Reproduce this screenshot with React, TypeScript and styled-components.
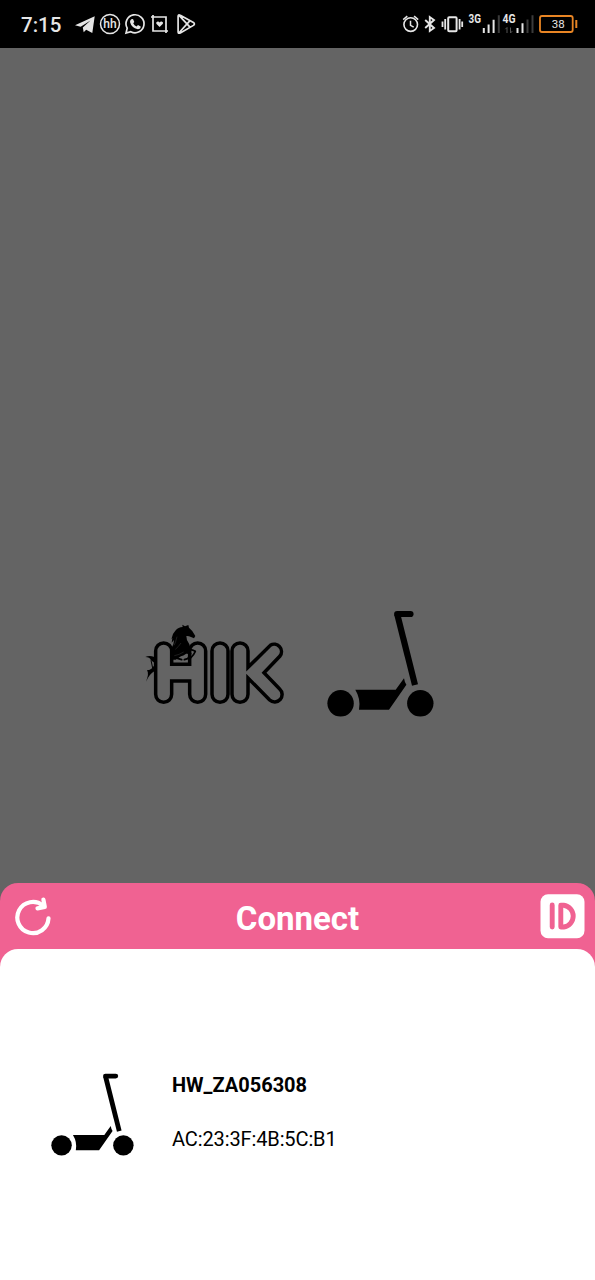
import React from 'react';
import styled, { createGlobalStyle } from 'styled-components';

const GlobalStyle = createGlobalStyle`
  * { box-sizing: border-box; }
  body { margin: 0; background: #646464; font-family: Roboto, sans-serif; }
  svg { display: block; flex: none; }
`;

const Screen = styled.div`
  display: flex;
  flex-direction: column;
  width: 595px;
  height: 1280px;
  overflow: hidden;
  background: #646464;
`;

const StatusBar = styled.header`
  display: flex;
  align-items: center;
  justify-content: space-between;
  height: 48px;
  flex: none;
  padding: 0 16px 0 21px;
  background: #000;
  color: #e6e6e6;
`;

const StatusGroup = styled.div`
  display: flex;
  align-items: center;
`;

const Clock = styled.span`
  width: 53px;
  font-size: 20.5px;
  font-weight: 500;
  line-height: 24px;
  padding-top: 1px;
`;

const Backdrop = styled.main`
  display: flex;
  align-items: flex-start;
  flex: 1;
  padding: 562px 0 0 145px;
`;

const LogoSlot = styled.div`
  width: 182px;
  padding-top: 14px;
`;

const Sheet = styled.section`
  display: flex;
  flex-direction: column;
  height: 397px;
  flex: none;
  border-radius: 18px 18px 0 0;
  background: #f06292;
`;

const SheetHeader = styled.div`
  display: flex;
  align-items: center;
  justify-content: space-between;
  height: 66px;
  padding: 1px 10px 0 14px;
`;

const Title = styled.h1`
  margin: 0;
  padding: 4px 0 0 3px;
  color: #fff;
  font-size: 33px;
  font-weight: 700;
  line-height: 40px;
`;

const IconButton = styled.button<{ $width: number }>`
  display: flex;
  width: ${(p) => p.$width}px;
  padding: 0;
  border: 0;
  background: none;
`;

const DeviceList = styled.div`
  flex: 1;
  padding: 124px 0 0 51px;
  border-radius: 18px 18px 0 0;
  background: #fff;
`;

const DeviceRow = styled.div`
  display: flex;
  align-items: flex-start;
  gap: 38px;
`;

const DeviceInfo = styled.div`
  display: flex;
  flex-direction: column;
  gap: 30px;
  color: #000;
`;

const DeviceText = styled.span<{ $bold?: boolean }>`
  font-size: 20px;
  font-weight: ${(p) => (p.$bold ? 700 : 400)};
  letter-spacing: ${(p) => (p.$bold ? '0' : '-0.12px')};
  line-height: 24px;
`;

const Scooter = ({ size }: { size: number }) => (
  <svg width={size} height={size} viewBox="0 0 107 107">
    <circle cx="13.6" cy="93.3" r="13.2" />
    <circle cx="93.3" cy="93.3" r="13.2" />
    <path d="M28.3 79.8H68.7L77 68.2Q77.6 72 79.4 74.8L62 99.7H32Q34 89 28.3 79.8Z" />
    <path d="M83.5 4H70.2" stroke="#000" strokeWidth="6.2" strokeLinecap="round" />
    <path d="M70.2 4L88 75" stroke="#000" strokeWidth="6.2" />
  </svg>
);

const HikLogo = () => (
  <svg width="140" height="81" viewBox="30 42 420 243">
    <g fill="none" stroke="#000" strokeWidth="10.5" strokeLinejoin="miter">
      <path d="M62 123A24 24 0 0 1 110 123V163H164V123A24 24 0 0 1 212 123V253A24 24 0 0 1 164 253V213H110V253A24 24 0 0 1 62 253Z" />
      <path d="M231 123A24 24 0 0 1 279 123V253A24 24 0 0 1 231 253Z" />
      <path d="M291 123A24 24 0 0 1 339 123V172L406 106A22 22 0 0 1 435 138L387 188L434 237A22 22 0 0 1 404 270L339 204V253A24 24 0 0 1 291 253Z" />
    </g>
    <path d="M109 88L114 72L121 62Q130 51 143 51L142 44L150 49L160 45L162 53Q174 62 181 78L177 85L168 81Q160 77 154 78Q154 90 161 99Q168 110 161 123Q153 135 138 139L122 149H109V116Q117 104 117 90L110 98L112 84Z" />
    <path d="M155 121Q168 116 181 124Q177 134 167 144M150 127L167 131L158 146L148 149M120 143L140 149" fill="none" stroke="#000" strokeWidth="5" strokeLinejoin="round" strokeLinecap="round" />
    <path d="M126 80Q122 98 117 106M138 99Q129 112 121 118M118 137Q132 135 146 126" fill="none" stroke="#4a4a4a" strokeWidth="1.2" />
    <path d="M58 141Q43 135 31 141Q44 141 48 151L58 158ZM58 168Q46 182 36 181Q43 190 33 215Q45 190 58 184Z" />
    <path d="M38 182Q47 185 58 168M48 151L53 174" fill="none" stroke="#000" strokeWidth="3" />
  </svg>
);

const NotificationIcons = () => (
  <svg width="124" height="26" viewBox="74 11 124 26" fill="none" stroke="#e6e6e6" strokeWidth="1.7">
    <path d="M75 25.2L94.7 16.2L92.3 33L86.2 29.7L83.7 32.2L82.8 27.5L90.5 20.5L80.7 26.7Z" fill="#e6e6e6" stroke="none" />
    <circle cx="110" cy="24" r="9.5" strokeWidth="1.5" />
    <text x="110" y="28" textAnchor="middle" fontFamily="Roboto, sans-serif" fontSize="12" fontWeight="500" fill="#e6e6e6" stroke="none">hh</text>
    <path d="M126 33.1L127.2 28.2A9 9 0 1 1 130.8 31.7Z" />
    <path d="M131.2 19.3L133 19L134.3 22L133.2 23.3Q134.3 25.5 136.5 26.4L138 25.1L140.7 26.5Q140.8 29.2 137.8 29.3Q131.4 27.7 130 22Q130 20.2 131.2 19.3Z" fill="#e6e6e6" stroke="none" />
    <path d="M153 15V31H168M151 17H166V33" />
    <path d="M159.6 27.1L156.3 23.7Q155.7 21.7 157.7 21.4Q159 21.3 159.6 22.5Q160.2 21.3 161.6 21.4Q163.6 21.7 162.9 23.7Z" fill="#e6e6e6" stroke="none" />
    <path d="M178.1 16.4Q178.1 14 180.3 15.3L193.4 22.4Q195.4 24 193.4 25.4L180.3 32.9Q178.1 34 178.1 31.7ZM179 15.4L190 27.1M179 32.7L190 20.6" />
  </svg>
);

const SystemIcons = () => (
  <svg width="178" height="28" viewBox="401 10 178 28" fill="none" stroke="#e6e6e6" strokeWidth="1.6">
    <circle cx="410.7" cy="24.6" r="6.8" />
    <path d="M403.2 19.6L407.3 16.1M414.1 16.1L418.2 19.6M410.5 20.7V25.3L413.7 27.1" strokeWidth="1.5" />
    <path d="M425.2 20L434 28L429.8 31V17L434 20L425.2 28" strokeWidth="1.9" />
    <rect x="448.2" y="17.2" width="8.4" height="14" rx="1" strokeWidth="2" />
    <path d="M445.2 19V29.5M442.5 21.5V27M459.6 19V29.5M462.2 21.5V27" strokeWidth="1.8" />
    <g fill="#e6e6e6" stroke="none" fontFamily="Roboto, sans-serif" fontWeight="700">
      <text x="468.5" y="23" fontSize="12" textLength="12.5" lengthAdjust="spacingAndGlyphs">3G</text>
      <text x="502.5" y="23" fontSize="12" textLength="13" lengthAdjust="spacingAndGlyphs">4G</text>
    </g>
    <path d="M483.8 28V33M488.6 24.5V33M493.6 19.7V33M517.5 28V33M522.5 23.3V33" strokeWidth="2" />
    <path d="M498.8 15.3V33M527.5 19.5V33M532.5 15.3V33" stroke="#3b3b3b" strokeWidth="2" />
    <path d="M507 33V27.5L505.4 29.2M510.5 27.5V33L512.2 31.2" stroke="#555" strokeWidth="1" />
    <rect x="540" y="16" width="32.7" height="16" rx="2" stroke="#e88524" strokeWidth="1.8" />
    <path d="M576.3 20V28" stroke="#e88524" strokeWidth="2" />
    <text x="558.2" y="28.2" textAnchor="middle" fontFamily="Roboto, sans-serif" fontSize="11.5" fill="#e6e6e6" stroke="none">38</text>
  </svg>
);

const RefreshIcon = () => (
  <svg width="38" height="40" viewBox="14 897 38 40" fill="none" stroke="#fff" strokeWidth="4.2" strokeLinecap="round" strokeLinejoin="round">
    <path d="M48.5 918.4A15.6 15.6 0 1 1 43 905.6" />
    <path d="M43.4 899.6L44.8 907L37.5 908.4" />
  </svg>
);

const IdIcon = () => (
  <svg width="45" height="45" viewBox="540 894 45 45">
    <rect x="540.5" y="894.3" width="44" height="44" rx="7.5" fill="#fff" />
    <g fill="none" stroke="#f06292" strokeLinecap="round" strokeLinejoin="round">
      <path d="M552.2 905V927" strokeWidth="4.9" />
      <path d="M560.8 905.2H563.7A11 11 0 0 1 563.7 927H560.8Z" strokeWidth="4.9" />
    </g>
  </svg>
);

export default function App() {
  return (
    <>
      <GlobalStyle />
      <Screen>
        <StatusBar>
          <StatusGroup>
            <Clock>7:15</Clock>
            <NotificationIcons />
          </StatusGroup>
          <SystemIcons />
        </StatusBar>
        <Backdrop>
          <LogoSlot>
            <HikLogo />
          </LogoSlot>
          <Scooter size={107} />
        </Backdrop>
        <Sheet>
          <SheetHeader>
            <IconButton $width={38} aria-label="Refresh">
              <RefreshIcon />
            </IconButton>
            <Title>Connect</Title>
            <IconButton $width={45} aria-label="Device ID">
              <IdIcon />
            </IconButton>
          </SheetHeader>
          <DeviceList>
            <DeviceRow>
              <Scooter size={83} />
              <DeviceInfo>
                <DeviceText $bold>HW_ZA056308</DeviceText>
                <DeviceText>AC:23:3F:4B:5C:B1</DeviceText>
              </DeviceInfo>
            </DeviceRow>
          </DeviceList>
        </Sheet>
      </Screen>
    </>
  );
}
